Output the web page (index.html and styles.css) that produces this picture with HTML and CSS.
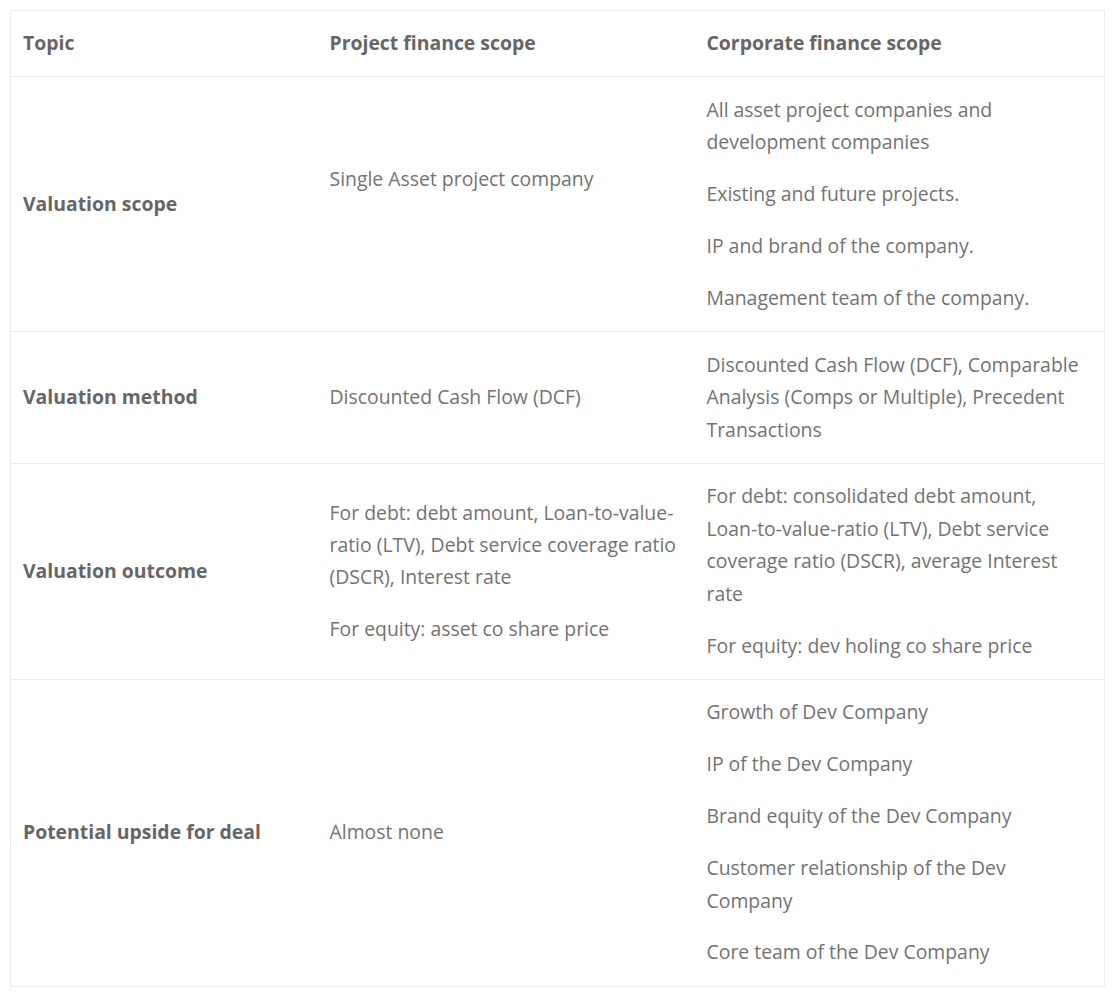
FILE: index.html
```html
<!DOCTYPE html>
<html lang="en">
<head>
<meta charset="utf-8">
<title>Project vs corporate finance</title>
<link rel="stylesheet" href="styles.css">
</head>
<body>
<div class="wrap">
<table class="cmp">
  <colgroup>
    <col class="c1">
    <col class="c2">
    <col class="c3">
  </colgroup>
  <thead>
    <tr>
      <th>Topic</th>
      <th>Project finance scope</th>
      <th>Corporate finance scope</th>
    </tr>
  </thead>
  <tbody>
    <tr>
      <td class="topic">Valuation scope</td>
      <td><p>Single Asset project company</p><p class="spacer">&nbsp;</p></td>
      <td>
        <p>All asset project companies and development companies</p>
        <p>Existing and future projects.</p>
        <p>IP and brand of the company.</p>
        <p>Management team of the company.</p>
      </td>
    </tr>
    <tr>
      <td class="topic">Valuation method</td>
      <td><p>Discounted Cash Flow (DCF)</p></td>
      <td><p>Discounted Cash Flow (DCF), Comparable Analysis (Comps or Multiple), Precedent Transactions</p></td>
    </tr>
    <tr>
      <td class="topic">Valuation outcome</td>
      <td>
        <p>For debt: debt amount, Loan-to-value-ratio (LTV), Debt service coverage ratio (DSCR), Interest rate</p>
        <p>For equity: asset co share price</p>
      </td>
      <td>
        <p>For debt: consolidated debt amount, Loan-to-value-ratio (LTV), Debt service coverage ratio (DSCR), average Interest rate</p>
        <p>For equity: dev holing co share price</p>
      </td>
    </tr>
    <tr>
      <td class="topic">Potential upside for deal</td>
      <td><p>Almost none</p></td>
      <td>
        <p>Growth of Dev Company</p>
        <p>IP of the Dev Company</p>
        <p>Brand equity of the Dev Company</p>
        <p>Customer relationship of the Dev Company</p>
        <p>Core team of the Dev Company</p>
      </td>
    </tr>
  </tbody>
</table>
</div>
</body>
</html>
```

FILE: styles.css
```css
html, body {
  margin: 0;
  padding: 0;
  background: #ffffff;
}

.wrap {
  padding: 10px 8px 10px 10px;
}

.cmp {
  width: 1094px;
  border-collapse: collapse;
  table-layout: fixed;
  border: 1px solid #ebebeb;
  font-family: "Open Sans", "Noto Sans", sans-serif;
  font-size: 19.4px;
  line-height: 32.4px;
  color: #737373;
}

.c1 { width: 307px; }
.c2 { width: 377px; }
.c3 { width: 410px; }

.cmp th,
.cmp td {
  padding: 16.75px 12px;
  text-align: left;
  vertical-align: middle;
  border-bottom: 1px solid #ebebeb;
}

.cmp th {
  padding-top: 16.25px;
  padding-bottom: 16.25px;
  font-weight: 700;
  color: #666666;
}

.cmp td.topic {
  font-weight: 700;
  color: #666666;
}

.cmp p {
  margin: 0 0 19.5px;
}

.cmp p:last-child {
  margin-bottom: 0;
}

.cmp p.spacer {
  line-height: 30px;
}
```
